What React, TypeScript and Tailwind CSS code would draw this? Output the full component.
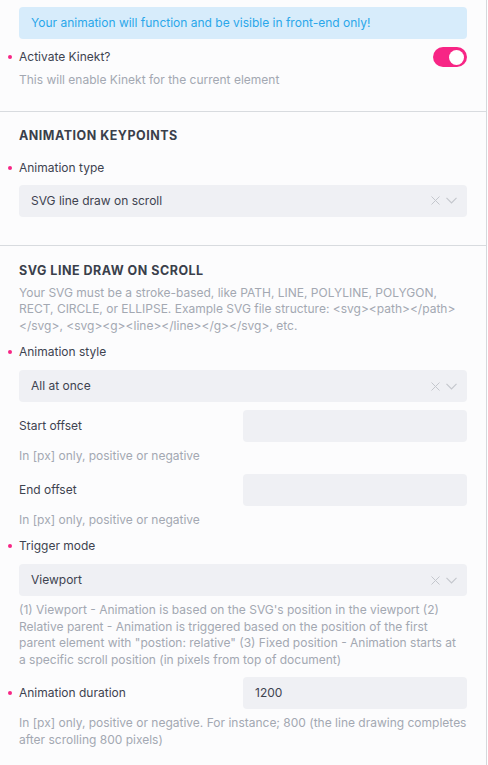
import React from "react";

const Dot = () => (
  <span className="absolute left-[-11px] top-1/2 -translate-y-1/2 w-[4px] h-[4px] rounded-full bg-[#f72585]" />
);

const Label = ({ children, req }: { children: React.ReactNode; req?: boolean }) => (
  <div className="relative text-[12px] leading-[16px] text-[#3e4350]">
    {req && <Dot />}
    {children}
  </div>
);

const Help = ({ children, narrow }: { children: React.ReactNode; narrow?: boolean }) => (
  <div className={narrow ? "pr-[4px] text-[12px] leading-[16.5px] text-[#a3a8b2]" : "text-[12px] leading-[16.5px] text-[#a3a8b2]"}>
    {children}
  </div>
);

const SelectBox = ({ value }: { value: string }) => (
  <div className="h-[32px] rounded-[4px] bg-[#eff0f4] flex items-center pl-[12px] pr-[10px] text-[12px] text-[#3e4350]">
    <span className="flex-1">{value}</span>
    <svg width="9" height="9" viewBox="0 0 9 9" className="mr-[6px]">
      <path d="M0.5 0.5 L8.5 8.5 M8.5 0.5 L0.5 8.5" stroke="#c4c7cd" strokeWidth="1" fill="none" />
    </svg>
    <svg width="11" height="7" viewBox="0 0 11 7">
      <path d="M0.5 0.8 L5.5 5.8 L10.5 0.8" stroke="#c4c7cd" strokeWidth="1.2" fill="none" />
    </svg>
  </div>
);

const InputRow = ({ label, value, req }: { label: string; value?: string; req?: boolean }) => (
  <div className="flex items-center">
    <div className="w-[224px]">
      <Label req={req}>{label}</Label>
    </div>
    <div className="flex-1 h-[32px] rounded-[4px] bg-[#eff0f4] flex items-center pl-[12px] text-[12px] text-[#3e4350]">
      {value}
    </div>
  </div>
);

const Heading = ({ children }: { children: React.ReactNode }) => (
  <div className="text-[12.5px] leading-[16px] font-bold tracking-[0.5px] text-[#3a3f4b]">{children}</div>
);

export default function App() {
  return (
    <div
      className="w-[487px] min-h-[765px] bg-[#fcfcfd] border-r border-[#d5d8dc]"
      style={{ fontFamily: "Inter, 'Noto Sans', sans-serif" }}
    >
      <div className="px-[19px] pt-[7px] pb-[22px] border-b border-[#d8dbdf]">
        <div className="h-[32px] rounded-[4px] bg-[#d7ecfb] flex items-center pl-[12px] text-[12px] text-[#2aa7ea]">
          Your animation will function and be visible in front-end only!
        </div>
        <div className="mt-[8px] flex items-center justify-between h-[20px]">
          <Label req>Activate Kinekt?</Label>
          <div className="w-[34px] h-[20px] rounded-full bg-[#f72585] flex items-center justify-end pr-[3px]">
            <div className="w-[15px] h-[15px] rounded-full bg-white" />
          </div>
        </div>
        <div className="mt-[5px]">
          <Help>This will enable Kinekt for the current element</Help>
        </div>
      </div>

      <div className="px-[19px] pt-[16px] pb-[28px] border-b border-[#d8dbdf]">
        <Heading>ANIMATION KEYPOINTS</Heading>
        <div className="mt-[16px]">
          <Label req>Animation type</Label>
        </div>
        <div className="mt-[9px]">
          <SelectBox value="SVG line draw on scroll" />
        </div>
      </div>

      <div className="px-[19px] pt-[17px] pb-[20px]">
        <Heading>SVG LINE DRAW ON SCROLL</Heading>
        <div className="mt-[6px]">
          <Help>
            Your SVG must be a stroke-based, like PATH, LINE, POLYLINE, POLYGON, RECT, CIRCLE, or ELLIPSE. Example SVG
            file structure: &lt;svg&gt;&lt;path&gt;&lt;/path&gt; &lt;/svg&gt;, &lt;svg&gt;&lt;g&gt;&lt;line&gt;&lt;/line&gt;&lt;/g&gt;&lt;/svg&gt;, etc.
          </Help>
        </div>
        <div className="mt-[10px]">
          <Label req>Animation style</Label>
        </div>
        <div className="mt-[10px]">
          <SelectBox value="All at once" />
        </div>
        <div className="mt-[8px]">
          <InputRow label="Start offset" />
        </div>
        <div className="mt-[6px]">
          <Help>In [px] only, positive or negative</Help>
        </div>
        <div className="mt-[9px]">
          <InputRow label="End offset" />
        </div>
        <div className="mt-[6px]">
          <Help>In [px] only, positive or negative</Help>
        </div>
        <div className="mt-[10px]">
          <Label req>Trigger mode</Label>
        </div>
        <div className="mt-[10px]">
          <SelectBox value="Viewport" />
        </div>
        <div className="mt-[6px]">
          <Help narrow>
            (1) Viewport - Animation is based on the SVG's position in the viewport (2) Relative parent - Animation is
            triggered based on the position of the first parent element with "postion: relative" (3) Fixed position -
            Animation starts at a specific scroll position (in pixels from top of document)
          </Help>
        </div>
        <div className="mt-[9px]">
          <InputRow label="Animation duration" value="1200" req />
        </div>
        <div className="mt-[6px]">
          <Help>
            In [px] only, positive or negative. For instance; 800 (the line drawing completes after scrolling 800 pixels)
          </Help>
        </div>
      </div>
    </div>
  );
}
